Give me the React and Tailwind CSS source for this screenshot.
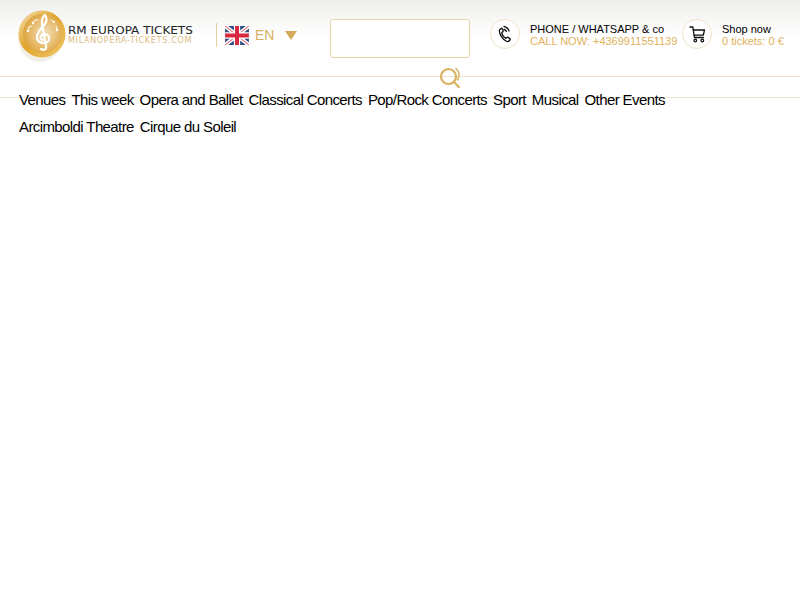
import React from 'react';

const navRows = [
  'Venues', 'This week', 'Opera and Ballet', 'Classical Concerts', 'Pop/Rock Concerts',
  'Sport', 'Musical', 'Other Events', 'Arcimboldi Theatre', 'Cirque du Soleil',
];

function Coin() {
  return (
    <svg width="50" height="54" viewBox="0 0 50 54" className="shrink-0">
      <defs>
        <linearGradient id="rim" x1="0" y1="0" x2="1" y2="1">
          <stop offset="0" stopColor="#f5e2b8" />
          <stop offset="0.45" stopColor="#e0a52c" />
          <stop offset="1" stopColor="#f0c869" />
        </linearGradient>
        <radialGradient id="face" cx="0.55" cy="0.5" r="0.6">
          <stop offset="0" stopColor="#f3e2c0" />
          <stop offset="0.6" stopColor="#e7ba6a" />
          <stop offset="1" stopColor="#d99d2e" />
        </radialGradient>
      </defs>
      <ellipse cx="22" cy="29" rx="22" ry="24" fill="#e9e4da" opacity="0.6" />
      <circle cx="24" cy="25" r="23.500" fill="url(#rim)" />
      <circle cx="24.500" cy="24.500" r="19.500" fill="url(#face)" />
      <path d="M23 40c3 2 6 0 5-3l-4-22c-.5-4 1-8 3-9 2 2 2 6 0 9-3 4-8 8-8 13 0 4 3 6 7 6 4 0 6-3 5-6-1-3-6-4-8-1-1 2 0 4 2 4" fill="none" stroke="#fff" strokeWidth="2.200" strokeLinecap="round" />
      <path d="M10 22l1-4 3-1M15 14l2-3 3 0M33 11l3 2M38 17l1 4" fill="none" stroke="#fff" strokeWidth="1" strokeLinecap="round" />
      <circle cx="10" cy="22" r="1.300" fill="#fff" />
      <circle cx="15" cy="14" r="1.200" fill="#fff" />
      <circle cx="36" cy="13" r="1.100" fill="#fff" />
      <circle cx="39" cy="21" r="1.200" fill="#fff" />
    </svg>
  );
}

function Flag() {
  return (
    <svg width="24" height="19" viewBox="0 0 60 48" className="shrink-0">
      <rect width="60" height="48" fill="#2b4a7e" />
      <path d="M0 0L60 48M60 0L0 48" stroke="#fff" strokeWidth="10" />
      <path d="M0 0L60 48M60 0L0 48" stroke="#e0475a" strokeWidth="2.500" />
      <path d="M30 0V48M0 24H60" stroke="#fff" strokeWidth="16" />
      <path d="M30 0V48M0 24H60" stroke="#d8283f" strokeWidth="10" />
    </svg>
  );
}

function PhoneIcon() {
  return (
    <svg width="16" height="18" viewBox="0 0 16 18" fill="none" stroke="#111" strokeWidth="1.300" strokeLinecap="round" strokeLinejoin="round">
      <path d="M4 3.500L2.500 5c-.6 3 2.500 9.500 7.500 11.500 1 .3 2-.2 3-1.500.4-.6.300-1-.2-1.400l-1.800-1.200c-.5-.3-.9-.2-1.300.2l-.8.8C6.500 12 5 9.500 4.800 7.500l1-.7c.4-.4.500-.8.300-1.300L5.200 3.700c-.3-.6-.8-.6-1.200-.2z" />
      <path d="M7 4.500c1.300.3 2 .9 2.400 2" />
      <path d="M7 1.500c2.700.6 4.300 2 5 4.500" />
    </svg>
  );
}

function CartIcon() {
  return (
    <svg width="17" height="17" viewBox="0 0 17 17" fill="none" stroke="#111" strokeWidth="1.300" strokeLinecap="round" strokeLinejoin="round">
      <path d="M1 1h2.800l1.700 10.500h9" />
      <path d="M4.200 4h11.300l-1.200 5.200H5.100" />
      <circle cx="6.300" cy="14.500" r="1.300" />
      <circle cx="13.300" cy="14.500" r="1.300" />
    </svg>
  );
}

function SearchIcon() {
  return (
    <svg width="23" height="22" viewBox="0 0 23 22" fill="none" stroke="#d9b15f" strokeWidth="2.200" strokeLinecap="round">
      <circle cx="9.500" cy="9.500" r="7.500" />
      <path d="M15 15l5 5" />
      <path d="M17 1.500c3.500 3 4 8 1.500 11.500" strokeWidth="1.500" />
    </svg>
  );
}

export default function App() {
  return (
    <div className="relative min-h-[600px] bg-white font-['Liberation_Sans',Arial,sans-serif] text-black">
      <header className="flex h-[77px] items-start border-b border-[#efdfcd] bg-gradient-to-b from-[#efefed] to-white to-50%">
        <div className="ml-[18px] mt-[9px] flex w-[176px] items-center">
          <Coin />
          <div className="mt-[-3px] leading-none">
            <div className="origin-left scale-x-[1.2] whitespace-nowrap font-['DejaVu_Sans',sans-serif] text-[10px] leading-[11px] text-[#222]">RM EUROPA TICKETS</div>
            <div className="whitespace-nowrap font-['DejaVu_Sans',sans-serif] text-[8px] leading-[9px] tracking-[0.7px] text-[#dcbb82]">MILANOPERA-TICKETS.COM</div>
          </div>
        </div>

        <div className="ml-[22px] mt-[23px] flex h-[24px] w-[114px] items-center border-l border-[#e6cf9f] pl-[8px]">
          <Flag />
          <span className="ml-[6px] text-[14px] text-[#d9b15f]">EN</span>
          <span className="ml-[11px] h-0 w-0 border-x-[6.500px] border-t-[9px] border-x-transparent border-t-[#d4aa5c]" />
        </div>

        <div className="mt-[19px] h-[39px] w-[140px] rounded-[3px] border border-[#e6d2a6] bg-white" />

        <div className="ml-[20px] mt-[19px] flex w-[192px] items-center">
          <div className="flex size-[30px] items-center justify-center rounded-full border border-[#f0e3c8] bg-white">
            <PhoneIcon />
          </div>
          <div className="ml-[10px] mt-[1px] whitespace-nowrap text-[11px] leading-[12px]">
            <div>PHONE / WHATSAPP &amp; co</div>
            <div className="text-[#e0b25c]">CALL NOW: +4369911551139</div>
          </div>
        </div>

        <div className="mt-[19px] flex items-center">
          <div className="flex size-[30px] items-center justify-center rounded-full border border-[#f0e3c8] bg-white">
            <CartIcon />
          </div>
          <div className="ml-[10px] mt-[1px] whitespace-nowrap text-[11px] leading-[12px]">
            <div>Shop now</div>
            <div className="text-[#e0b25c]">0 tickets: 0 €</div>
          </div>
        </div>
      </header>

      <div className="absolute left-[439px] top-[67px]">
        <SearchIcon />
      </div>

      <div className="h-[21px] border-b border-[#efe6d9]" />

      <nav className="mt-[-12px] flex flex-wrap gap-x-[6px] pl-[19px] pr-[30px] text-[15px] leading-[27px] tracking-[-0.6px]">
        {navRows.map((item) => (
          <a key={item} href="#" className="whitespace-nowrap text-black">{item}</a>
        ))}
      </nav>
    </div>
  );
}
